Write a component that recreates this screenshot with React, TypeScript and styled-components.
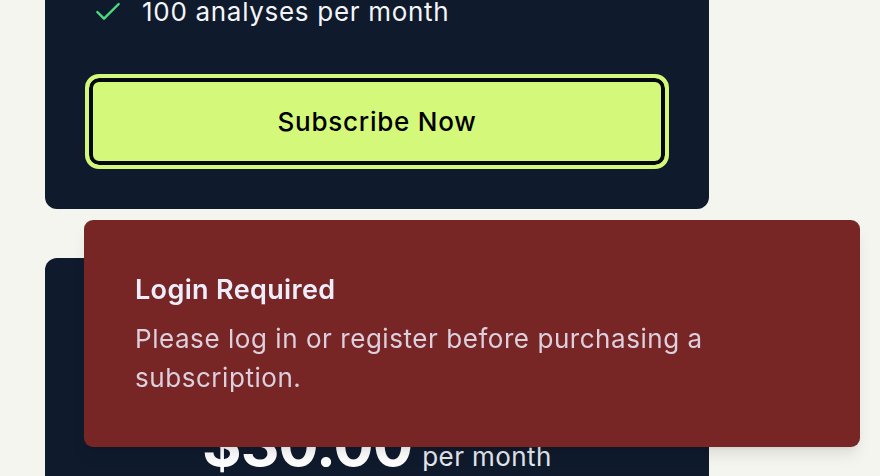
import React from 'react';
import styled, { createGlobalStyle } from 'styled-components';

const GlobalStyle = createGlobalStyle`
  html, body {
    margin: 0;
    padding: 0;
    background: #f5f5f0;
    font-family: Inter, "Noto Sans", sans-serif;
    overflow: hidden;
  }
`;

const Page = styled.div`
  width: 880px;
  height: 476px;
  overflow: hidden;
`;

const Column = styled.div`
  display: flex;
  flex-direction: column;
  gap: 49px;
  width: 664px;
  margin-left: 45px;
  margin-top: -150px;
`;

const Card = styled.div`
  background: #0f1a2d;
  border-radius: 12px;
  padding: 40px;
  color: #ffffff;
`;

const Features = styled.ul`
  list-style: none;
  margin: 0;
  padding: 0 0 0 7px;
  display: flex;
  flex-direction: column;
  gap: 16px;
`;

const Feature = styled.li`
  display: flex;
  align-items: center;
  gap: 18px;
  font-size: 26px;
  line-height: 36px;
  letter-spacing: 0.7px;
  color: #f4f5f8;
`;

const CheckIcon = styled.svg`
  width: 32px;
  height: 32px;
  flex-shrink: 0;
  color: #4ade80;
`;

const SubscribeButton = styled.button`
  display: block;
  width: 100%;
  height: 95px;
  margin-top: 44px;
  background: #d4f87a;
  border: 4px solid #d4f87a;
  border-radius: 14px;
  box-shadow: inset 0 0 0 4px #05080f;
  font-family: Inter, "Noto Sans", sans-serif;
  font-size: 26px;
  font-weight: 500;
  letter-spacing: 0.75px;
  color: #000000;
  cursor: pointer;
`;

const PlanName = styled.h3`
  margin: 0;
  font-size: 32px;
  line-height: 40px;
  font-weight: 700;
`;

const PlanDesc = styled.p`
  margin: 12px 0 0;
  font-size: 26px;
  line-height: 39px;
  color: #c7ccd6;
`;

const PriceRow = styled.div`
  display: flex;
  align-items: baseline;
  justify-content: center;
  gap: 10px;
  margin-top: 25px;
`;

const Price = styled.span`
  font-size: 60px;
  line-height: 1;
  font-weight: 700;
  letter-spacing: -1px;
  color: #ffffff;
`;

const Period = styled.span`
  font-size: 26px;
  letter-spacing: 0.4px;
  color: #e6e8ee;
`;

const Toast = styled.div`
  position: fixed;
  right: 20px;
  bottom: 29px;
  width: 776px;
  box-sizing: border-box;
  padding: 49px 50px 50px 51px;
  background: #772625;
  border-radius: 9px;
  box-shadow: 0 10px 15px -3px rgba(0, 0, 0, 0.1), 0 4px 6px -4px rgba(0, 0, 0, 0.1);
`;

const ToastTitle = styled.div`
  font-size: 27px;
  line-height: 42px;
  font-weight: 600;
  letter-spacing: 0.35px;
  color: #eceefb;
`;

const ToastBody = styled.div`
  margin-top: 8px;
  font-size: 26px;
  line-height: 39px;
  letter-spacing: 0.55px;
  color: #dcd0df;
`;

const Check = () => (
  <CheckIcon viewBox="0 0 24 24" fill="none" stroke="currentColor" strokeWidth={1.8} strokeLinecap="round" strokeLinejoin="round">
    <path d="M20 6 9 17l-5-5" />
  </CheckIcon>
);

const basicFeatures = ['Full report access', 'Priority support', '100 analyses per month'];

const App: React.FC = () => {
  return (
    <Page>
      <GlobalStyle />
      <Column>
        <Card>
          <Features>
            {basicFeatures.map((f) => (
              <Feature key={f}>
                <Check />
                {f}
              </Feature>
            ))}
          </Features>
          <SubscribeButton>Subscribe Now</SubscribeButton>
        </Card>
        <Card>
          <PlanName>Pro</PlanName>
          <PlanDesc>For teams that need more analyses.</PlanDesc>
          <PriceRow>
            <Price>$30.00</Price>
            <Period>per month</Period>
          </PriceRow>
        </Card>
      </Column>
      <Toast role="status">
        <ToastTitle>Login Required</ToastTitle>
        <ToastBody>Please log in or register before purchasing a subscription.</ToastBody>
      </Toast>
    </Page>
  );
};

export default App;
